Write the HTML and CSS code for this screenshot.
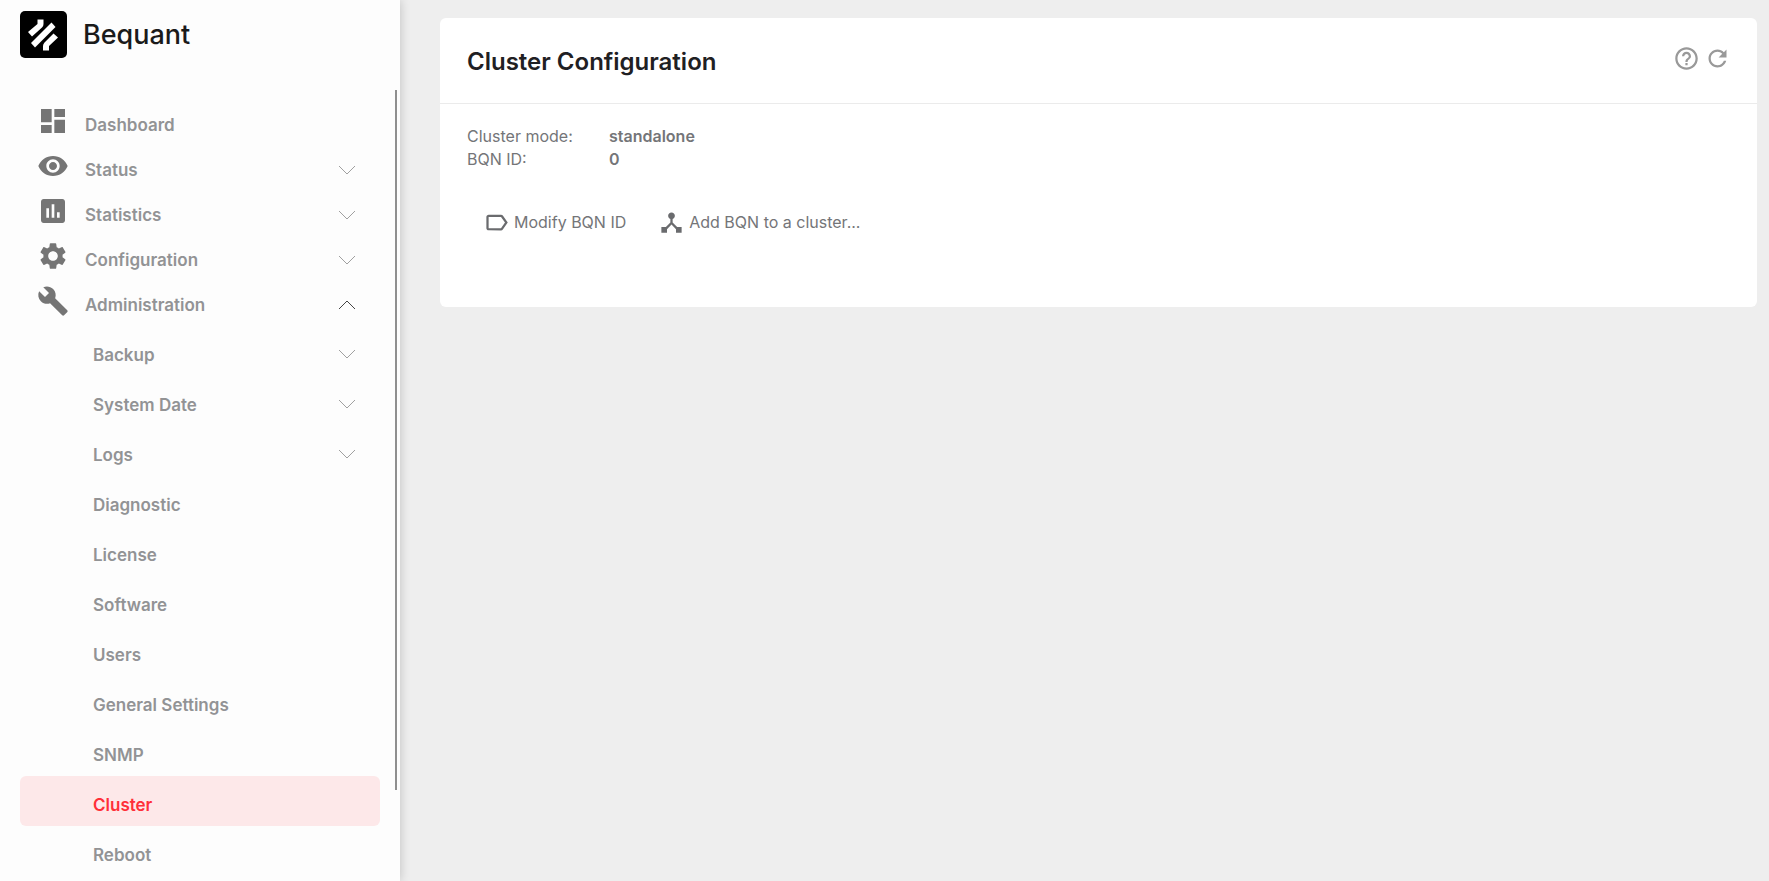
FILE: index.html
```html
<!DOCTYPE html>
<html lang="en">
<head>
    <meta charset="utf-8">
    <title>Cluster Configuration</title>
    <link rel="stylesheet" href="styles.css">
</head>
<body>
    <aside class="sidebar">
        <a class="brand" href="#">
            <svg class="brand-mark" viewBox="0 0 47 47" aria-hidden="true">
                <rect width="47" height="47" rx="5"/>
                <path class="stripe" d="M17.500 8.500h6v4.500q0 2-1.500 3.500L12 25.500l-4-4.500 9.500-8z"/>
                <path class="stripe" d="M31.500 11.500l4 4.500-20.500 20.500-4-4.500z"/>
                <path class="stripe" d="M33.500 22.500l4.500 4-9 8.500v4.500h-6v-4.500q0-2 1.500-3.500z"/>
            </svg>
            <span class="brand-name">Bequant</span>
        </a>

        <nav class="nav">
            <a class="nav-item" href="#">
                <svg class="nav-icon" viewBox="0 0 24 24"><path d="M3 13h8V3H3v10zm0 8h8v-6H3v6zm10 0h8V11h-8v10zm0-18v6h8V3h-8z"/></svg>
                <span class="nav-label">Dashboard</span>
            </a>
            <a class="nav-item" href="#">
                <svg class="nav-icon" viewBox="0 0 24 24"><path d="M12 4.500C7 4.500 2.730 7.610 1 12c1.730 4.390 6 7.500 11 7.500s9.270-3.110 11-7.500c-1.730-4.390-6-7.500-11-7.500zM12 17c-2.760 0-5-2.240-5-5s2.240-5 5-5 5 2.240 5 5-2.240 5-5 5zm0-8c-1.660 0-3 1.340-3 3s1.340 3 3 3 3-1.340 3-3-1.340-3-3-3z"/></svg>
                <span class="nav-label">Status</span>
                <svg class="chevron" viewBox="0 0 18 10"><path d="M1 1l8 8 8-8"/></svg>
            </a>
            <a class="nav-item" href="#">
                <svg class="nav-icon" viewBox="0 0 24 24"><path d="M19 3H5c-1.100 0-2 .9-2 2v14c0 1.100.9 2 2 2h14c1.100 0 2-.9 2-2V5c0-1.100-.9-2-2-2zM9 17H7v-7h2v7zm4 0h-2V7h2v10zm4 0h-2v-4h2v4z"/></svg>
                <span class="nav-label">Statistics</span>
                <svg class="chevron" viewBox="0 0 18 10"><path d="M1 1l8 8 8-8"/></svg>
            </a>
            <a class="nav-item" href="#">
                <svg class="nav-icon" viewBox="0 0 24 24"><path d="M19.140 12.940c.04-.3.060-.61.060-.94 0-.32-.02-.64-.07-.94l2.030-1.580c.18-.14.230-.41.120-.61l-1.920-3.320c-.12-.22-.37-.29-.59-.22l-2.390.96c-.5-.38-1.030-.7-1.620-.94l-.36-2.540c-.04-.24-.24-.41-.48-.41h-3.840c-.24 0-.43.170-.47.410l-.36 2.540c-.59.240-1.130.570-1.620.94l-2.390-.96c-.22-.08-.47 0-.59.220L2.740 8.870c-.12.210-.08.470.12.610l2.030 1.580c-.05.300-.09.630-.09.940s.02.640.07.940l-2.030 1.580c-.18.140-.23.410-.12.610l1.920 3.320c.12.220.37.290.59.220l2.390-.96c.5.380 1.030.700 1.620.940l.36 2.540c.05.240.24.410.48.410h3.840c.24 0 .44-.17.470-.41l.36-2.540c.59-.24 1.130-.56 1.620-.94l2.390.96c.22.080.47 0 .59-.22l1.920-3.320c.12-.22.070-.47-.12-.61l-2.010-1.580zM12 15.600c-1.980 0-3.600-1.620-3.600-3.600s1.620-3.600 3.600-3.600 3.600 1.620 3.600 3.600-1.620 3.600-3.600 3.600z"/></svg>
                <span class="nav-label">Configuration</span>
                <svg class="chevron" viewBox="0 0 18 10"><path d="M1 1l8 8 8-8"/></svg>
            </a>
            <a class="nav-item" href="#">
                <svg class="nav-icon" viewBox="0 0 24 24"><path d="M22.700 19l-9.100-9.100c.9-2.300.4-5-1.500-6.900-2-2-5-2.400-7.400-1.300L9 6 6 9 1.600 4.700C.4 7.100.9 10.100 2.900 12.100c1.900 1.900 4.600 2.400 6.900 1.500l9.100 9.100c.4.400 1 .4 1.400 0l2.300-2.300c.5-.4.500-1.100.1-1.400z"/></svg>
                <span class="nav-label">Administration</span>
                <svg class="chevron open" viewBox="0 0 18 10"><path d="M1 9l8-8 8 8"/></svg>
            </a>

            <div class="subnav">
                <a class="subnav-item" href="#"><span>Backup</span><svg class="chevron" viewBox="0 0 18 10"><path d="M1 1l8 8 8-8"/></svg></a>
                <a class="subnav-item" href="#"><span>System Date</span><svg class="chevron" viewBox="0 0 18 10"><path d="M1 1l8 8 8-8"/></svg></a>
                <a class="subnav-item" href="#"><span>Logs</span><svg class="chevron" viewBox="0 0 18 10"><path d="M1 1l8 8 8-8"/></svg></a>
                <a class="subnav-item" href="#"><span>Diagnostic</span></a>
                <a class="subnav-item" href="#"><span>License</span></a>
                <a class="subnav-item" href="#"><span>Software</span></a>
                <a class="subnav-item" href="#"><span>Users</span></a>
                <a class="subnav-item" href="#"><span>General Settings</span></a>
                <a class="subnav-item" href="#"><span>SNMP</span></a>
                <a class="subnav-item active" href="#"><span>Cluster</span></a>
                <a class="subnav-item" href="#"><span>Reboot</span></a>
            </div>
        </nav>
        <div class="scroll-thumb"></div>
    </aside>

    <main class="content">
        <section class="card">
            <header class="card-header">
                <h1>Cluster Configuration</h1>
                <div class="card-tools">
                    <button class="tool" type="button" aria-label="Help">
                        <svg viewBox="0 0 24 24"><path d="M11 18h2v-2h-2v2zm1-16C6.480 2 2 6.480 2 12s4.480 10 10 10 10-4.480 10-10S17.520 2 12 2zm0 18c-4.410 0-8-3.590-8-8s3.590-8 8-8 8 3.590 8 8-3.590 8-8 8zm0-14c-2.210 0-4 1.790-4 4h2c0-1.100.9-2 2-2s2 .9 2 2c0 2-3 1.750-3 5h2c0-2.250 3-2.500 3-5 0-2.210-1.790-4-4-4z"/></svg>
                    </button>
                    <button class="tool" type="button" aria-label="Refresh">
                        <svg viewBox="0 0 24 24"><path d="M17.650 6.350C16.200 4.900 14.210 4 12 4c-4.420 0-7.990 3.580-7.990 8s3.570 8 7.990 8c3.730 0 6.840-2.550 7.730-6h-2.080c-.82 2.330-3.040 4-5.650 4-3.310 0-6-2.690-6-6s2.690-6 6-6c1.660 0 3.140.69 4.220 1.780L13 11h7V4l-2.350 2.350z"/></svg>
                    </button>
                </div>
            </header>
            <div class="card-body">
                <dl class="details">
                    <dt>Cluster mode:</dt>
                    <dd>standalone</dd>
                    <dt>BQN ID:</dt>
                    <dd>0</dd>
                </dl>
                <div class="actions">
                    <button class="action" type="button">
                        <svg viewBox="0 0 24 24"><path d="M17.630 5.840C17.270 5.330 16.670 5 16 5L5 5.010C3.900 5.010 3 5.900 3 7v10c0 1.100.9 1.990 2 1.990L16 19c.67 0 1.270-.33 1.630-.84L22 12l-4.370-6.160zM16 17H5V7h11l3.550 5L16 17z"/></svg>
                        Modify BQN ID
                    </button>
                    <button class="action" type="button">
                        <svg viewBox="0 0 24 24"><path d="M17 16l-4-4V8.820C14.160 8.400 15 7.300 15 6c0-1.660-1.340-3-3-3S9 4.340 9 6c0 1.300.84 2.400 2 2.820V12l-4 4H3v5h5v-3.050l4-4.200 4 4.200V21h5v-5h-4z"/></svg>
                        Add BQN to a cluster...
                    </button>
                </div>
            </div>
        </section>
    </main>
</body>
</html>
```
FILE: styles.css
```css
* {
    box-sizing: border-box;
}

body {
    margin: 0;
    display: flex;
    height: 100vh;
    overflow: hidden;
    background: #eee;
    color: #747578;
    font-family: Inter, "Liberation Sans", sans-serif;
    font-size: 16px;
}

a {
    color: inherit;
    text-decoration: none;
}

button {
    padding: 0;
    border: none;
    background: none;
    color: inherit;
    font: inherit;
    cursor: pointer;
}

/* Sidebar */
.sidebar {
    position: relative;
    flex: 0 0 400px;
    display: flex;
    flex-direction: column;
    background: #fdfdfd;
    box-shadow: 0 0 10px rgba(0, 0, 0, 0.2);
}

.brand {
    display: flex;
    flex: 0 0 90px;
    align-items: flex-start;
    gap: 16px;
    padding: 11px 20px 0;
    color: #1a1a1a;
}

.brand-mark {
    width: 47px;
    height: 47px;
}

.stripe {
    fill: #fff;
}

.brand-name {
    font-size: 27px;
    font-weight: 500;
    line-height: 48px;
}

.nav {
    flex: 1;
    min-height: 0;
    overflow: hidden;
    padding: 8px 20px 0;
    color: #929395;
    font-size: 17px;
    font-weight: 600;
}

.nav-item {
    display: flex;
    align-items: center;
    height: 45px;
    padding: 0 24px 0 17px;
}

.nav-icon {
    width: 32px;
    height: 32px;
    margin-right: 16px;
    fill: #757575;
}

.nav-label {
    padding-top: 8px;
}

.chevron {
    width: 18px;
    height: 10px;
    margin-left: auto;
    margin-top: 8px;
    fill: none;
    stroke: #a0a0a0;
}

.chevron.open {
    stroke: #444;
}

.subnav {
    padding-top: 3px;
}

.subnav-item {
    display: flex;
    align-items: center;
    height: 50px;
    padding: 8px 24px 0 73px;
    border-radius: 6px;
}

.subnav-item .chevron {
    margin-top: 0;
    margin-bottom: 2px;
}

.subnav-item.active {
    background: #fde8e9;
    color: #ff2f38;
}

.scroll-thumb {
    position: absolute;
    top: 90px;
    right: 3px;
    width: 2px;
    height: calc(100% - 181px);
    background: #8f8f8f;
}

/* Main area */
.content {
    flex: 1;
    padding: 18px 12px 18px 40px;
}

.card {
    background: #fff;
    border-radius: 6px;
}

.card-header {
    display: flex;
    justify-content: space-between;
    padding: 27px 26px 24px 27px;
    border-bottom: 1px solid #ebebeb;
}

.card-header h1 {
    margin: 0;
    color: #1f2023;
    font-size: 24px;
    font-weight: 600;
    line-height: 34px;
}

.card-tools {
    display: flex;
    align-items: flex-start;
    gap: 4px;
    color: #999;
}

.tool svg {
    display: block;
    width: 27px;
    height: 27px;
    fill: currentColor;
}

.card-body {
    padding: 21px 27px 71px;
}

.details {
    display: grid;
    grid-template-columns: 142px 1fr;
    margin: 0;
    line-height: 23px;
}

.details dd {
    margin: 0;
    font-weight: 600;
}

.actions {
    display: flex;
    gap: 32px;
    padding: 38px 16px 0;
}

.action {
    display: flex;
    align-items: center;
    gap: 4px;
    line-height: 27px;
}

.action svg {
    width: 27px;
    height: 27px;
    fill: #6a6b6e;
}
```
